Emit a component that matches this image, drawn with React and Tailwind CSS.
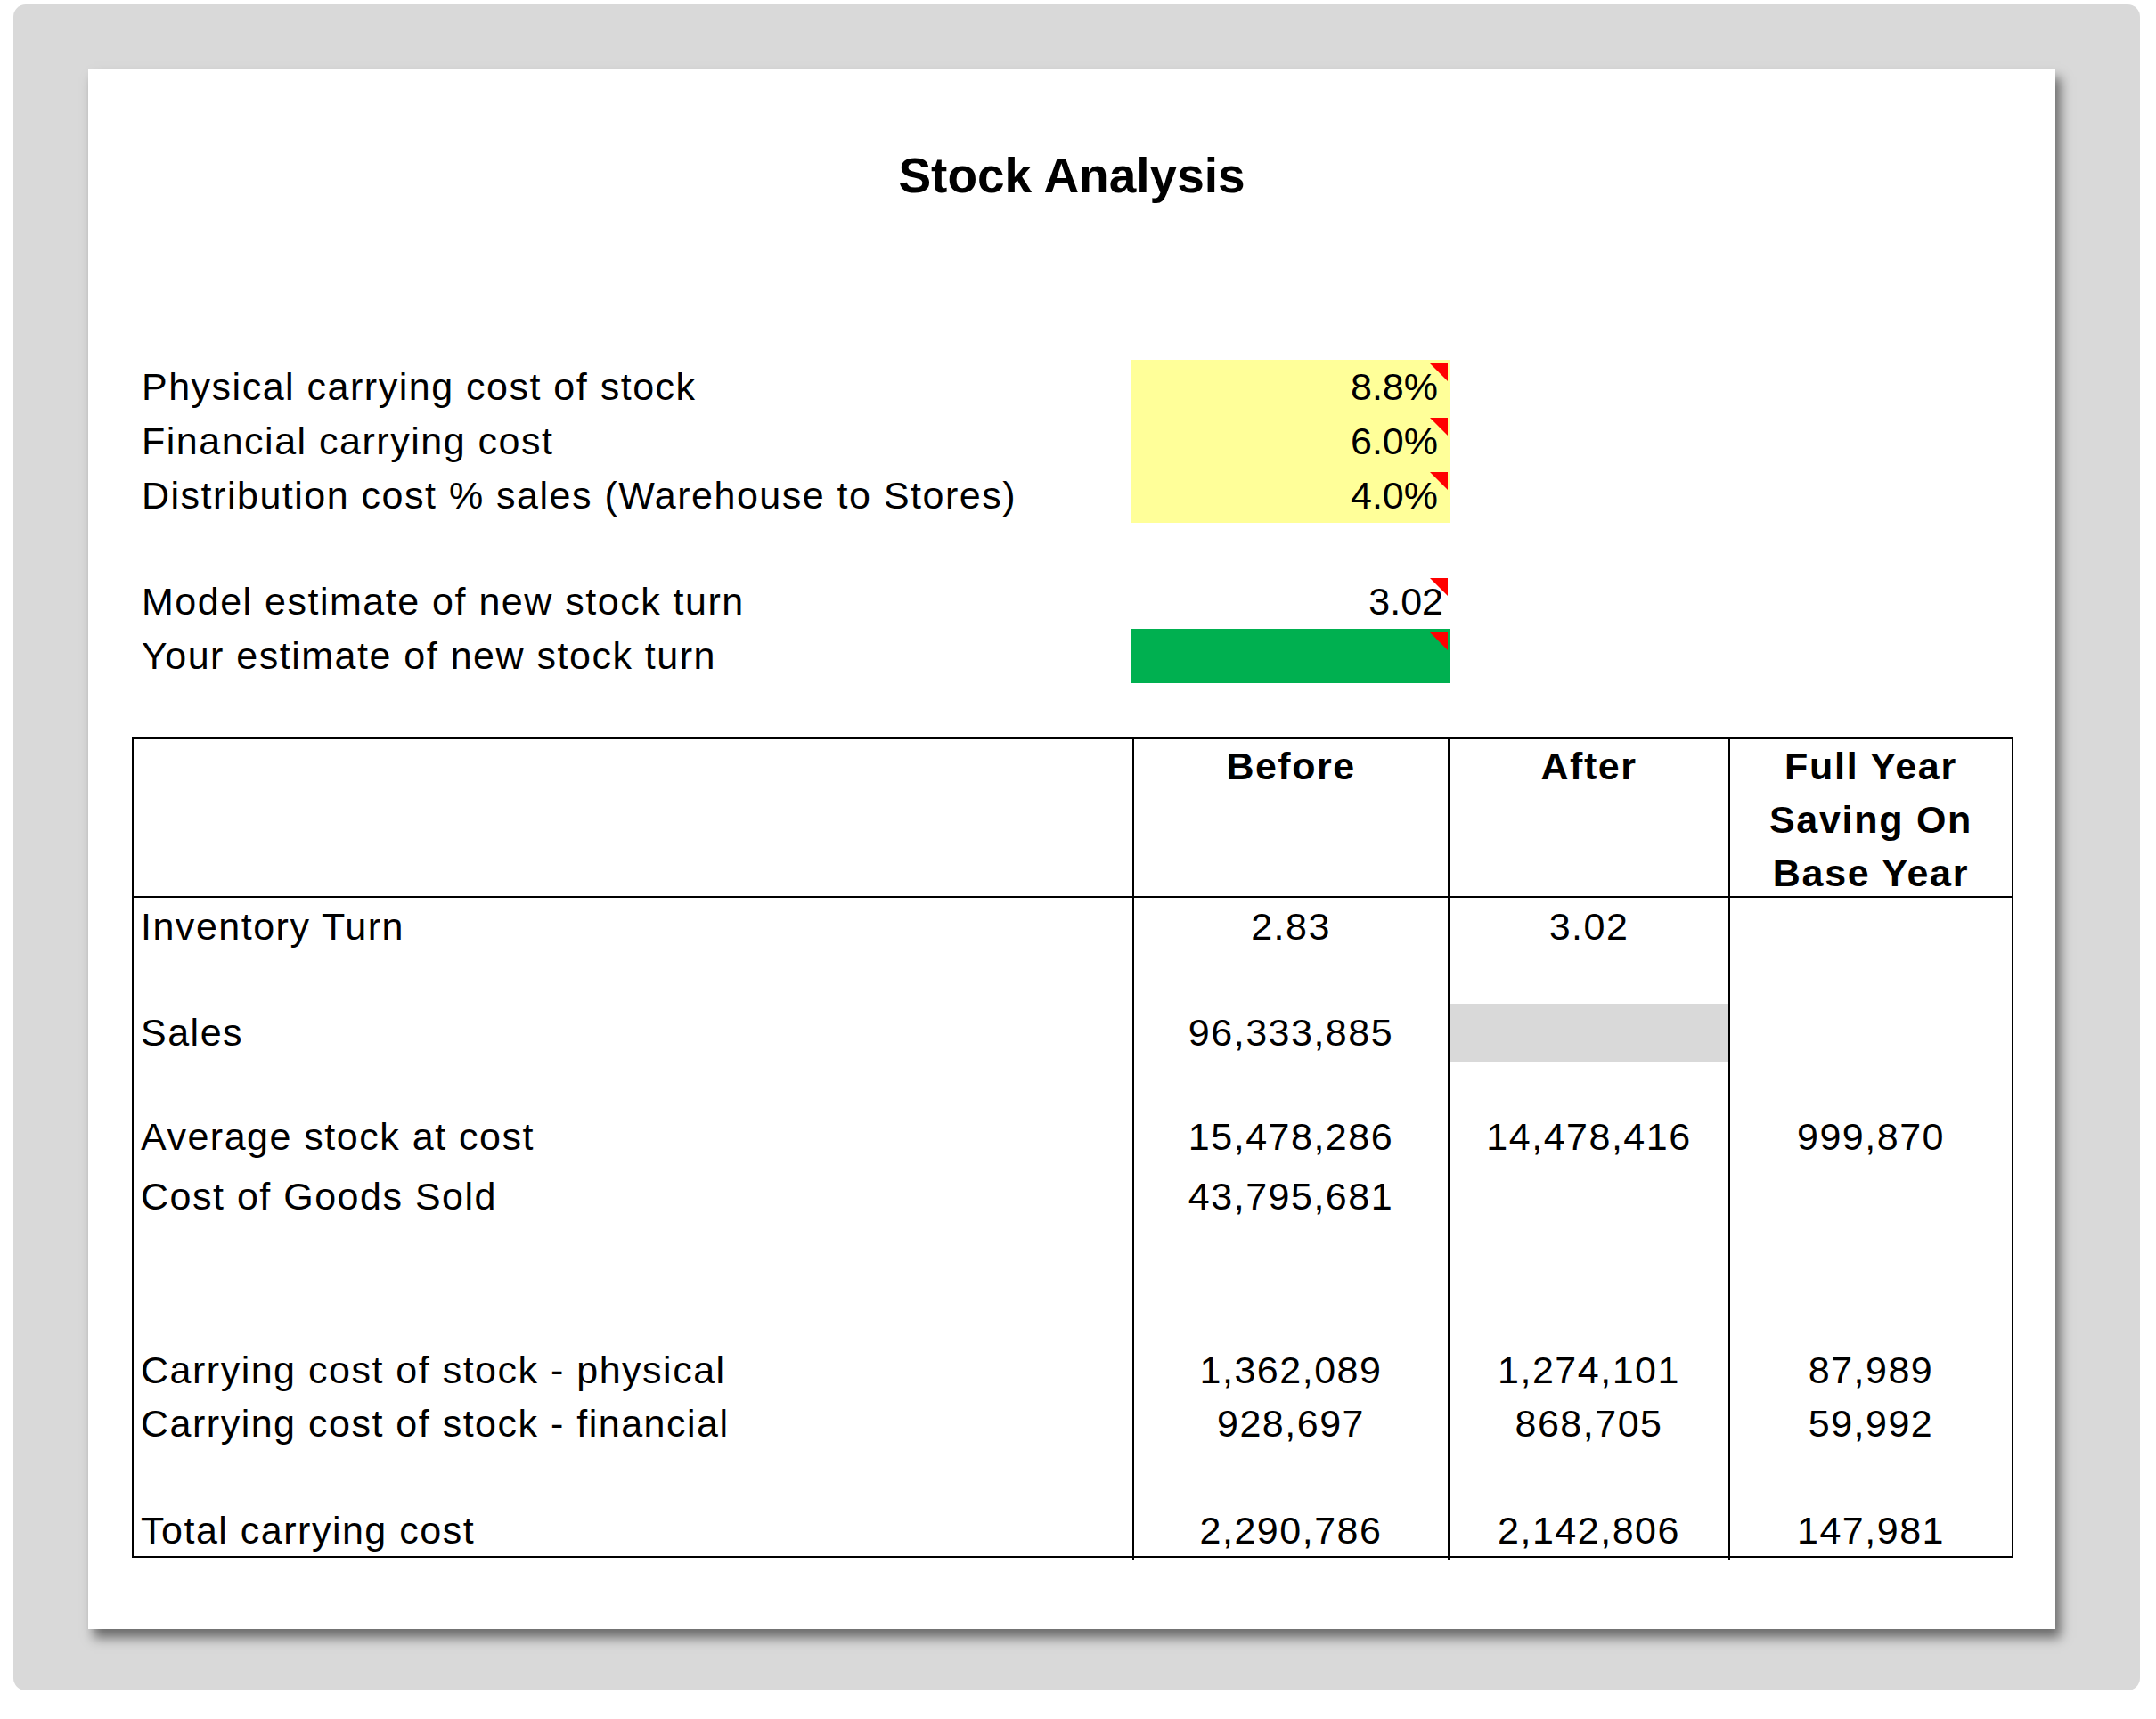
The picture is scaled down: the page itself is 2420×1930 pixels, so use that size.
import React from "react";

const Tri = () => (
  <div className="absolute right-[3px] top-[4px] w-0 h-0 border-t-[20px] border-t-[#ff0000] border-l-[20px] border-l-transparent" />
);

const rows = [
  { h: "h-[60px]", l: "Inventory Turn", b: "2.83", a: "3.02", f: "" },
  { h: "h-[59px]" },
  { h: "h-[60px]", l: "Sales", b: "96,333,885", a: "", f: "", gray: true },
  { h: "h-[57px]" },
  { h: "h-[60px]", l: "Average stock at cost", b: "15,478,286", a: "14,478,416", f: "999,870" },
  { h: "h-[7px]" },
  { h: "h-[60px]", l: "Cost of Goods Sold", b: "43,795,681", a: "", f: "" },
  { h: "h-[135px]" },
  { h: "h-[60px]", l: "Carrying cost of stock - physical", b: "1,362,089", a: "1,274,101", f: "87,989" },
  { h: "h-[60px]", l: "Carrying cost of stock - financial", b: "928,697", a: "868,705", f: "59,992" },
  { h: "h-[60px]" },
  { h: "h-[60px]", l: "Total carrying cost", b: "2,290,786", a: "2,142,806", f: "147,981" },
  { h: "h-[1px]" },
];

export default function App() {
  return (
    <div
      className="w-[2420px] h-[1930px] bg-white text-black"
      style={{ fontFamily: '"Liberation Sans", Arial, sans-serif' }}
    >
      <div className="ml-[15px] pt-[5px]">
        <div className="w-[2387px] h-[1893px] bg-[#d9d9d9] rounded-[14px] pt-[72px] pl-[84px]">
          <div className="w-[2208px] h-[1752px] bg-white shadow-[6px_10px_12px_rgba(0,0,0,0.5)] pt-[90px]">
            <div className="text-center text-[55px] font-bold leading-[60px]">Stock Analysis</div>
            <div className="mt-[177px] pl-[60px] text-[43px] tracking-[0.035em]">
              {[
                ["Physical carrying cost of stock", "8.8%"],
                ["Financial carrying cost", "6.0%"],
                ["Distribution cost % sales (Warehouse to Stores)", "4.0%"],
              ].map(([l, v]) => (
                <div key={l} className="flex h-[61px] items-center">
                  <div className="w-[1111px]">{l}</div>
                  <div className="relative w-[358px] h-full bg-[#ffff99] flex items-center justify-end pr-[14px] tracking-normal">
                    {v}
                    <Tri />
                  </div>
                </div>
              ))}
              <div className="h-[58px]" />
              <div className="flex h-[61px] items-center">
                <div className="w-[1111px]">Model estimate of new stock turn</div>
                <div className="relative w-[358px] h-full flex items-center justify-end pr-[8px] tracking-normal">
                  3.02
                  <Tri />
                </div>
              </div>
              <div className="flex h-[61px] items-center">
                <div className="w-[1111px]">Your estimate of new stock turn</div>
                <div className="relative w-[358px] h-full bg-[#00b050]">
                  <Tri />
                </div>
              </div>
            </div>
            <div className="ml-[49px] mt-[61px] w-[2112px] border-2 border-black text-[43px] tracking-[0.035em]">
              <div className="grid grid-cols-[1121px_354px_315px_318px] h-[178px] border-b-2 border-black font-bold leading-[60px] text-center">
                <div />
                <div className="border-l-2 border-black">Before</div>
                <div className="border-l-2 border-black">After</div>
                <div className="border-l-2 border-black tracking-[0.04em]">
                  Full Year
                  <br />
                  Saving On
                  <br />
                  Base Year
                </div>
              </div>
              {rows.map((r, i) => (
                <div key={i} className={`grid grid-cols-[1121px_354px_315px_318px] ${r.h}`}>
                  <div className="pl-[8px] flex items-center">{r.l}</div>
                  <div className="border-l-2 border-black flex items-center justify-center">{r.b}</div>
                  <div className={`border-l-2 border-black flex items-center justify-center ${r.gray ? "bg-[#d9d9d9]" : ""}`}>{r.a}</div>
                  <div className="border-l-2 border-black flex items-center justify-center">{r.f}</div>
                </div>
              ))}
            </div>
          </div>
        </div>
      </div>
    </div>
  );
}
